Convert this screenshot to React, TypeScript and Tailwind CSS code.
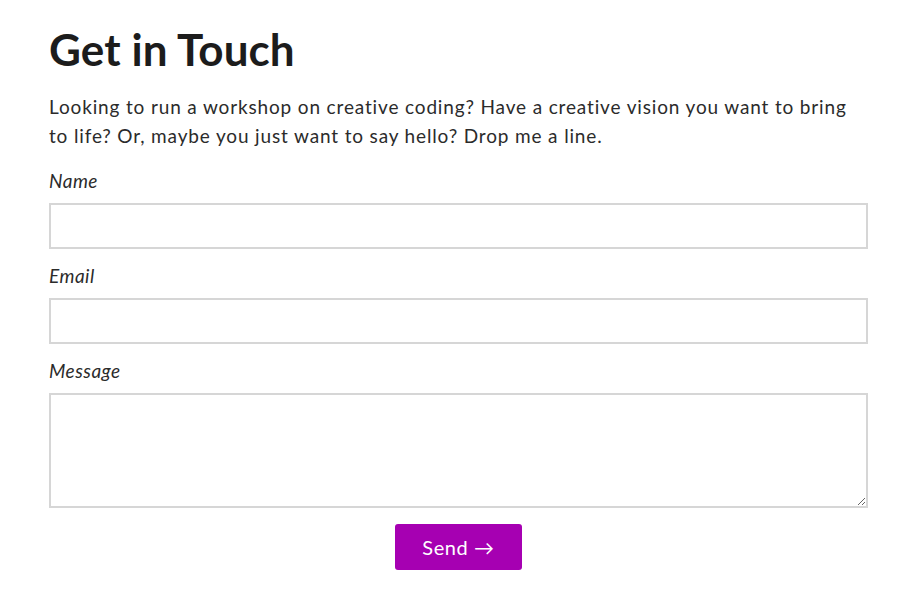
export default function App() {
  return (
    <div className="min-h-screen bg-white font-['Lato','Noto_Sans',sans-serif] text-[#222]">
      <div className="ml-[49px] w-[819px] pt-[23px]">
        <h1 className="text-[44px] font-bold leading-[52px] tracking-[0.1px] text-[#1c1c1c]">
          Get in Touch
        </h1>
        <p className="mt-[18px] w-[808px] text-[19px] leading-[28.8px] tracking-[0.85px] text-[#2b2b2b]">
          Looking to run a workshop on creative coding? Have a creative vision
          you want to bring to life? Or, maybe you just want to say hello? Drop
          me a line.
        </p>
        <form className="mt-[15px] flex flex-col">
          <label className="text-[19px] italic leading-[29px] tracking-[0.5px] text-[#2b2b2b]">
            Name
          </label>
          <input
            type="text"
            className="mt-[8px] h-[46px] w-full border-2 border-[#d6d6d6] bg-white outline-none"
          />
          <label className="mt-[12px] text-[19px] italic leading-[29px] tracking-[0.5px] text-[#2b2b2b]">
            Email
          </label>
          <input
            type="email"
            className="mt-[8px] h-[46px] w-full border-2 border-[#d6d6d6] bg-white outline-none"
          />
          <label className="mt-[12px] text-[19px] italic leading-[29px] tracking-[0.5px] text-[#2b2b2b]">
            Message
          </label>
          <textarea className="mt-[8px] h-[115px] w-full resize-y border-2 border-[#d6d6d6] bg-white outline-none" />
          <div className="mt-[16px] flex justify-center">
            <button
              type="button"
              className="h-[46px] w-[127px] rounded-[3px] bg-[#a600b2] text-[20px] tracking-[0.6px] text-white"
            >
              Send →
            </button>
          </div>
        </form>
      </div>
    </div>
  );
}
